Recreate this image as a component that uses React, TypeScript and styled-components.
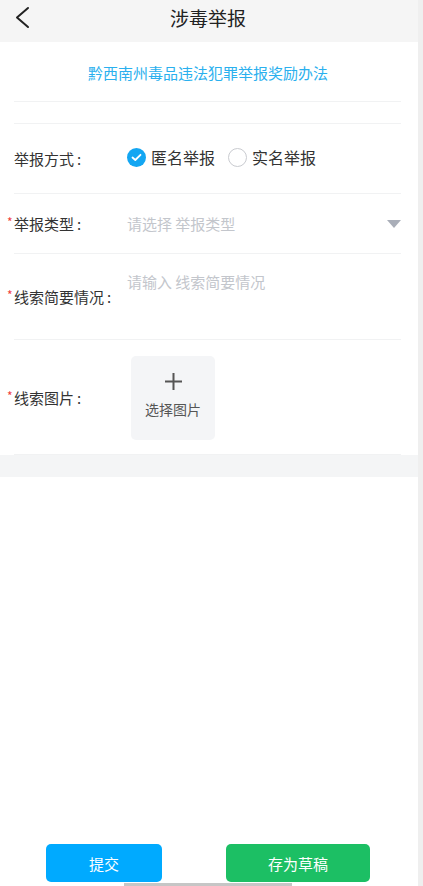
import React, { useState } from "react";
import styled, { createGlobalStyle } from "styled-components";

const Global = createGlobalStyle`
  html, body { margin: 0; padding: 0; background: #fff; }
  body { font-family: "Noto Sans CJK SC", "Noto Sans", sans-serif; }
  * { box-sizing: border-box; }
`;

const Screen = styled.div`
  display: flex;
  width: 423px;
  height: 886px;
  position: relative;
  overflow: hidden;
`;

const Main = styled.div`
  width: 418px;
  display: flex;
  flex-direction: column;
  background: #fff;
`;

const Strip = styled.div`
  width: 5px;
  background: #efefef;
`;

const Header = styled.div`
  height: 42px;
  background: #f5f5f5;
  display: flex;
  align-items: center;
  justify-content: center;
  position: relative;
`;

const Back = styled.svg`
  position: absolute;
  left: 12px;
  top: 5px;
`;

const Title = styled.div`
  font-size: 19px;
  color: #222;
  margin-top: -8px;
  margin-left: -2px;
`;

const LinkRow = styled.div`
  height: 59px;
  display: flex;
  align-items: center;
  justify-content: center;
  font-size: 15px;
  color: #2ab0ee;
  padding-top: 1px;
  padding-right: 2px;
`;

const Divider = styled.div`
  height: 1px;
  margin: 0 17px 0 14px;
  background: #f1f2f3;
`;

const Gap = styled.div<{ h: number }>`
  height: ${(p) => p.h}px;
`;

const Row = styled.div<{ h: number; align?: string }>`
  height: ${(p) => p.h}px;
  display: flex;
  align-items: ${(p) => p.align || "center"};
  padding-left: 14px;
  padding-right: 17px;
`;

const Label = styled.div<{ required?: boolean; dy?: number }>`
  width: 113px;
  flex-shrink: 0;
  font-size: 15px;
  color: #333;
  position: relative;
  transform: translateY(${(p) => p.dy || 0}px);
  &::before {
    content: ${(p) => (p.required ? '"*"' : '""')};
    position: absolute;
    left: -7px;
    top: 0px;
    color: #f04040;
    font-size: 12px;
  }
`;

const Colon = styled.span`
  padding-left: 3px;
`;

const Radios = styled.div`
  display: flex;
  align-items: center;
  gap: 13px;
  margin-top: -3px;
`;

const RadioOpt = styled.div`
  display: flex;
  align-items: center;
  gap: 5px;
  font-size: 16px;
  color: #333;
  cursor: pointer;
`;

const Circle = styled.span<{ on: boolean }>`
  width: 19px;
  height: 19px;
  border-radius: 50%;
  display: inline-flex;
  align-items: center;
  justify-content: center;
  background: ${(p) => (p.on ? "#13a6f2" : "#fff")};
  border: ${(p) => (p.on ? "none" : "1px solid #c9cbd0")};
`;

const Placeholder = styled.div`
  flex: 1;
  font-size: 15px;
  color: #c3c6cc;
`;

const Triangle = styled.div`
  width: 0;
  height: 0;
  border-left: 7px solid transparent;
  border-right: 7px solid transparent;
  border-top: 8px solid #a9aeb8;
`;

const AreaCol = styled.div`
  flex: 1;
  padding-top: 17px;
  font-size: 15px;
  color: #c3c6cc;
`;

const Upload = styled.div`
  width: 84px;
  height: 84px;
  margin-left: 4px;
  margin-top: 1px;
  border-radius: 5px;
  background: #f4f5f7;
  display: flex;
  flex-direction: column;
  align-items: center;
  padding-top: 16px;
  gap: 8px;
  font-size: 14px;
  color: #555;
`;

const Band = styled.div`
  height: 22px;
  background: #f4f5f6;
`;

const Spacer = styled.div`
  flex: 1;
`;

const Buttons = styled.div`
  display: flex;
  justify-content: space-between;
  padding: 0 48px 4px 46px;
`;

const Btn = styled.button<{ color: string; w: number }>`
  width: ${(p) => p.w}px;
  height: 38px;
  border: none;
  border-radius: 5px;
  background: ${(p) => p.color};
  color: #fff;
  font-size: 15px;
  font-family: inherit;
  padding: 0;
`;

const HomeBar = styled.div`
  position: absolute;
  left: 124px;
  bottom: 0;
  width: 168px;
  height: 3px;
  background: #c6c6c6;
`;

const Check = () => (
  <svg width="11" height="9" viewBox="0 0 11 9">
    <path d="M1.5 4.5 L4.3 7 L9.5 1.8" fill="none" stroke="#fff" strokeWidth="1.8" strokeLinecap="round" strokeLinejoin="round" />
  </svg>
);

export default function App() {
  const [anon, setAnon] = useState(true);
  return (
    <Screen>
      <Global />
      <Main>
        <Header>
          <Back width="22" height="26" viewBox="0 0 22 26">
            <path d="M16 3 L5 12.5 L16 22" fill="none" stroke="#222" strokeWidth="2" strokeLinecap="round" strokeLinejoin="round" />
          </Back>
          <Title>涉毒举报</Title>
        </Header>
        <LinkRow>黔西南州毒品违法犯罪举报奖励办法</LinkRow>
        <Divider />
        <Gap h={21} />
        <Divider />
        <Row h={69}>
          <Label>举报方式<Colon>:</Colon></Label>
          <Radios>
            <RadioOpt onClick={() => setAnon(true)}>
              <Circle on={anon}>{anon && <Check />}</Circle>
              匿名举报
            </RadioOpt>
            <RadioOpt onClick={() => setAnon(false)}>
              <Circle on={!anon}>{!anon && <Check />}</Circle>
              实名举报
            </RadioOpt>
          </Radios>
        </Row>
        <Divider />
        <Row h={59}>
          <Label required>举报类型<Colon>:</Colon></Label>
          <Placeholder>请选择 举报类型</Placeholder>
          <Triangle />
        </Row>
        <Divider />
        <Row h={85} align="stretch">
          <Label required dy={32}>线索简要情况<Colon>:</Colon></Label>
          <AreaCol>请输入 线索简要情况</AreaCol>
        </Row>
        <Divider />
        <Row h={114}>
          <Label required>线索图片<Colon>:</Colon></Label>
          <Upload>
            <svg width="19" height="19" viewBox="0 0 19 19">
              <path d="M9.5 1 V18 M1 9.5 H18" stroke="#555" strokeWidth="2" />
            </svg>
            选择图片
          </Upload>
        </Row>
        <Divider />
        <Band />
        <Spacer />
        <Buttons>
          <Btn color="#00aaff" w={116}>提交</Btn>
          <Btn color="#1cbf64" w={144}>存为草稿</Btn>
        </Buttons>
      </Main>
      <Strip />
      <HomeBar />
    </Screen>
  );
}
